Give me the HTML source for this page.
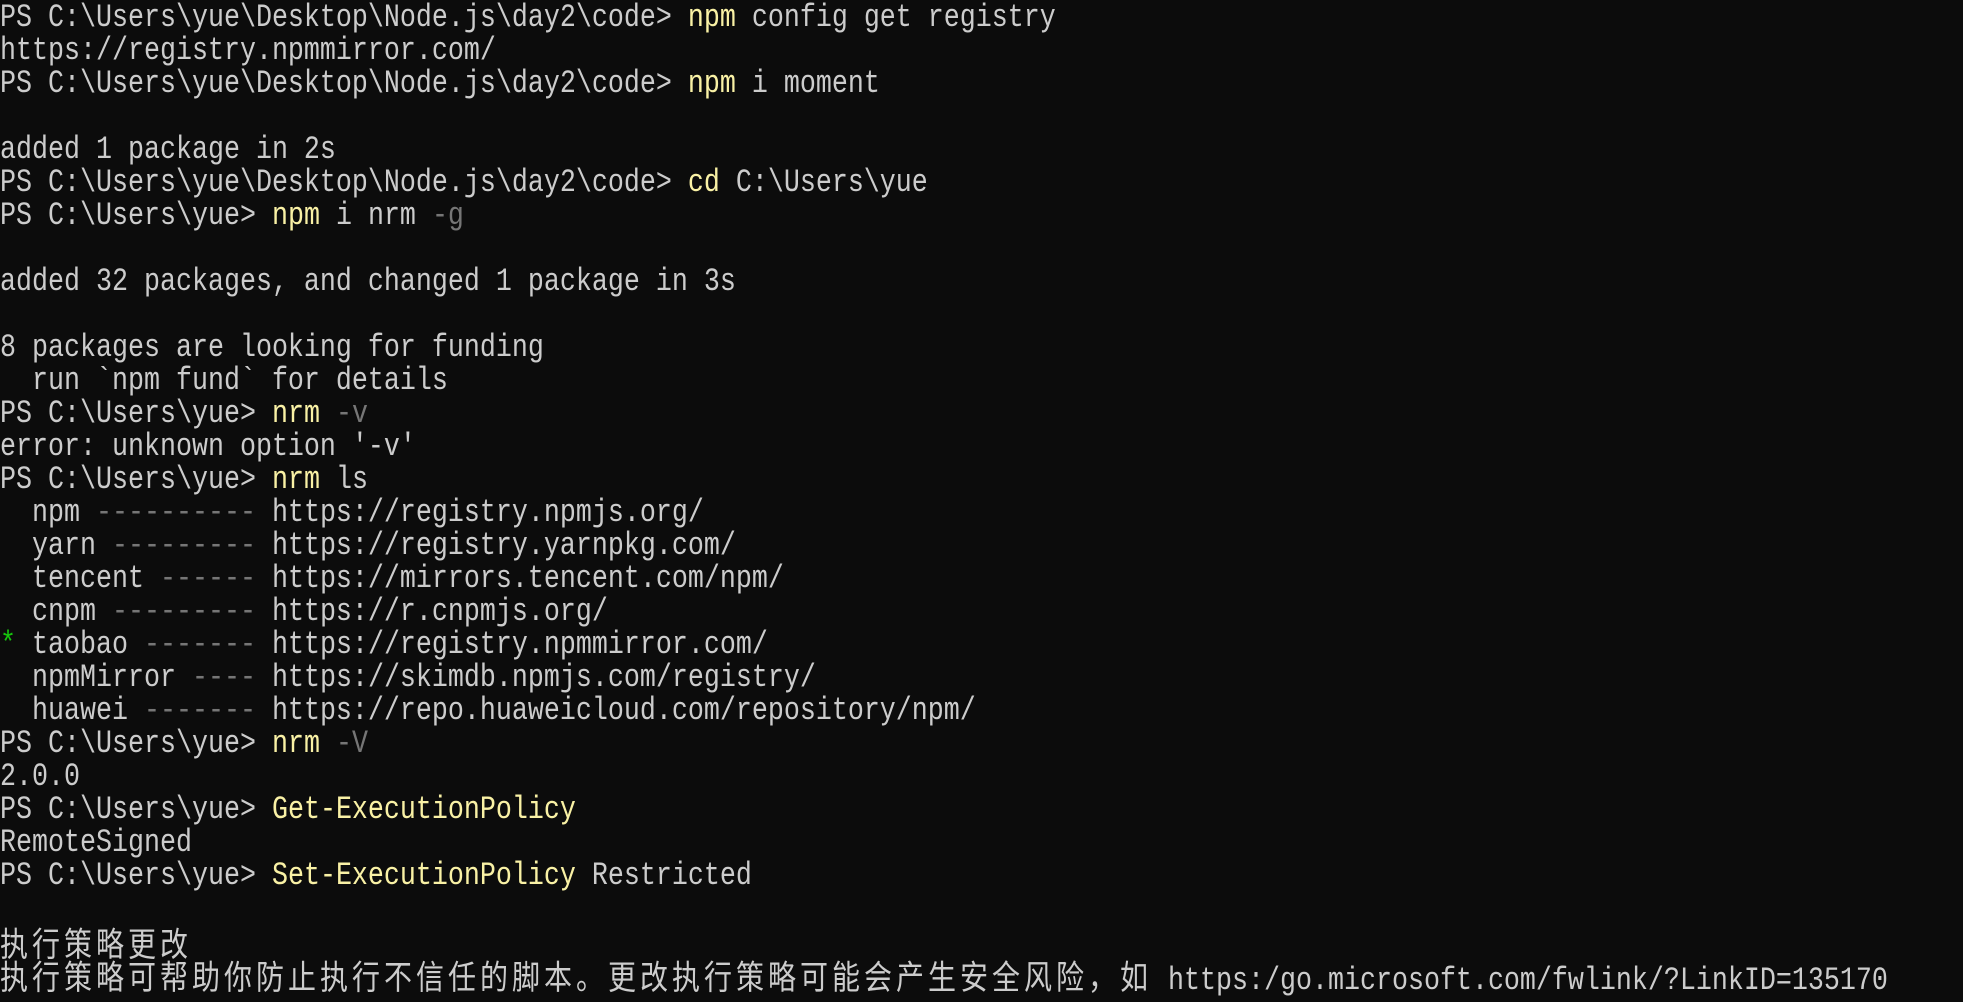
<!DOCTYPE html>
<html><head><meta charset="utf-8"><style>
html,body{margin:0;padding:0;background:#0c0c0c;width:1963px;height:990px;overflow:hidden}
.w{position:absolute;left:0;top:3px}
.l{position:absolute;left:0;height:33px;line-height:33px;white-space:pre;color:#cccccc;
font-family:"Liberation Mono","Noto Sans CJK SC",monospace;font-size:26.67px;transform:scaleY(1.2);transform-origin:0 50%}
.y{color:#f9f1a5}.g{color:#767676}.gr{color:#16c60c}
.c{font-family:"Noto Sans CJK SC",sans-serif;font-size:28px;letter-spacing:4px}
</style></head><body><div class="w">
<div class="l" style="top:0px">PS C:\Users\yue\Desktop\Node.js\day2\code&gt; <span class="y">npm</span> config get registry</div>
<div class="l" style="top:33px">https://registry.npmmirror.com/</div>
<div class="l" style="top:66px">PS C:\Users\yue\Desktop\Node.js\day2\code&gt; <span class="y">npm</span> i moment</div>
<div class="l" style="top:132px">added 1 package in 2s</div>
<div class="l" style="top:165px">PS C:\Users\yue\Desktop\Node.js\day2\code&gt; <span class="y">cd</span> C:\Users\yue</div>
<div class="l" style="top:198px">PS C:\Users\yue&gt; <span class="y">npm</span> i nrm <span class="g">-g</span></div>
<div class="l" style="top:264px">added 32 packages, and changed 1 package in 3s</div>
<div class="l" style="top:330px">8 packages are looking for funding</div>
<div class="l" style="top:363px">  run `npm fund` for details</div>
<div class="l" style="top:396px">PS C:\Users\yue&gt; <span class="y">nrm</span> <span class="g">-v</span></div>
<div class="l" style="top:429px">error: unknown option '-v'</div>
<div class="l" style="top:462px">PS C:\Users\yue&gt; <span class="y">nrm</span> ls</div>
<div class="l" style="top:495px">  npm <span class="g">----------</span> https://registry.npmjs.org/</div>
<div class="l" style="top:528px">  yarn <span class="g">---------</span> https://registry.yarnpkg.com/</div>
<div class="l" style="top:561px">  tencent <span class="g">------</span> https://mirrors.tencent.com/npm/</div>
<div class="l" style="top:594px">  cnpm <span class="g">---------</span> https://r.cnpmjs.org/</div>
<div class="l" style="top:627px"><span class="gr">*</span> taobao <span class="g">-------</span> https://registry.npmmirror.com/</div>
<div class="l" style="top:660px">  npmMirror <span class="g">----</span> https://skimdb.npmjs.com/registry/</div>
<div class="l" style="top:693px">  huawei <span class="g">-------</span> https://repo.huaweicloud.com/repository/npm/</div>
<div class="l" style="top:726px">PS C:\Users\yue&gt; <span class="y">nrm</span> <span class="g">-V</span></div>
<div class="l" style="top:759px">2.0.0</div>
<div class="l" style="top:792px">PS C:\Users\yue&gt; <span class="y">Get-ExecutionPolicy</span></div>
<div class="l" style="top:825px">RemoteSigned</div>
<div class="l" style="top:858px">PS C:\Users\yue&gt; <span class="y">Set-ExecutionPolicy</span> Restricted</div>
<div class="l" style="top:924px"><span class="c">执行策略更改</span></div>
<div class="l" style="top:957px"><span class="c">执行策略可帮助你防止执行不信任的脚本。更改执行策略可能会产生安全风险，如</span> https:/go.microsoft.com/fwlink/?LinkID=135170</div>
</div></body></html>
